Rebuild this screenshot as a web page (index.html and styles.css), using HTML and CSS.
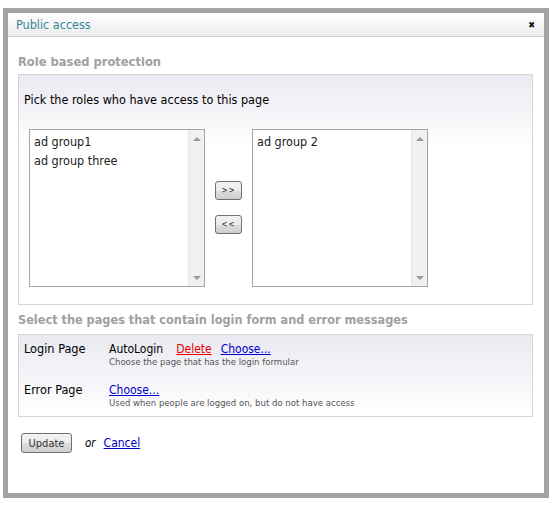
FILE: index.html
```html
<!DOCTYPE html>
<html>
<head>
<meta charset="utf-8">
<link rel="stylesheet" href="styles.css">
</head>
<body>
<div class="dialog">
  <div class="titlebar">
    <span class="title">Public access</span>
    <span class="close">&#x2716;</span>
  </div>
  <div class="content">
    <h2 class="heading">Role based protection</h2>
    <div class="box roles">
      <p class="intro">Pick the roles who have access to this page</p>
      <div class="picker">
        <div class="listbox">
          <div class="items">
            <div class="item">ad group1</div>
            <div class="item">ad group three</div>
          </div>
          <div class="scrollbar"><span class="arrow up"></span><span class="arrow down"></span></div>
        </div>
        <div class="movers">
          <button class="btn small">&gt;&gt;</button>
          <button class="btn small">&lt;&lt;</button>
        </div>
        <div class="listbox">
          <div class="items">
            <div class="item">ad group 2</div>
          </div>
          <div class="scrollbar"><span class="arrow up"></span><span class="arrow down"></span></div>
        </div>
      </div>
    </div>
    <h2 class="heading h2b">Select the pages that contain login form and error messages</h2>
    <div class="box pages">
      <div class="row">
        <div class="label">Login Page</div>
        <div class="value">
          <div class="line"><span class="page">AutoLogin</span><a class="link red" href="#">Delete</a><a class="link" href="#">Choose...</a></div>
          <div class="hint">Choose the page that has the login formular</div>
        </div>
      </div>
      <div class="row">
        <div class="label">Error Page</div>
        <div class="value">
          <div class="line"><a class="link first" href="#">Choose...</a></div>
          <div class="hint">Used when people are logged on, but do not have access</div>
        </div>
      </div>
    </div>
    <div class="actions">
      <button class="btn update">Update</button>
      <span class="or">or</span>
      <a class="link cancel" href="#">Cancel</a>
    </div>
  </div>
</div>
</body>
</html>
```
FILE: styles.css
```css
html, body {
  margin: 0;
  padding: 0;
  background: #fff;
}
body {
  font-family: "DejaVu Sans Condensed", "DejaVu Sans", sans-serif;
  font-size: 12px;
  color: #000;
  padding: 8px 0 0 3px;
}
.dialog {
  width: 536px;
  height: 480px;
  border: 5px solid #a3a3a3;
  background: #fff;
}
.titlebar {
  height: 23px;
  border-bottom: 1px solid #cfcfcf;
  background: linear-gradient(#ffffff, #ececec);
  display: flex;
  align-items: center;
  justify-content: space-between;
  padding: 0 9px 0 8px;
}
.title {
  color: #33889a;
  font-size: 12.5px;
}
.close {
  font-size: 9px;
  color: #111;
}
.content {
  padding: 0 11px 0 10px;
}
.heading {
  margin: 0;
  padding-top: 16px;
  height: 21px;
  font-size: 12.8px;
  font-weight: bold;
  color: #a0a0a0;
  line-height: 17px;
}
.h2b {
  padding-top: 6px;
  height: 23px;
  font-size: 12.6px;
}
.box {
  border: 1px solid #d4d4d4;
  background: linear-gradient(#e9e9f1, #ffffff 70px);
}
.roles {
  height: 229px;
  padding: 0 10px;
}
.intro {
  margin: 0 0 0 -5px;
  padding-top: 18px;
  height: 36px;
  line-height: 13px;
  font-size: 12.5px;
}
.picker {
  display: flex;
  align-items: flex-start;
}
.listbox {
  width: 174px;
  height: 156px;
  border: 1px solid #a5a5a5;
  background: #fff;
  display: flex;
}
.items {
  flex: 1;
  padding: 2px 4px;
}
.item {
  height: 19px;
  line-height: 19px;
  font-size: 12.5px;
  color: #222;
}
.scrollbar {
  width: 15px;
  background: #f0f0f0;
  border-left: 1px solid #e6e6e6;
  display: flex;
  flex-direction: column;
  justify-content: space-between;
  align-items: center;
  padding: 7px 0 6px;
}
.arrow {
  width: 0;
  height: 0;
  border-left: 4px solid transparent;
  border-right: 4px solid transparent;
}
.arrow.up { border-bottom: 4px solid #9a9a9a; }
.arrow.down { border-top: 4px solid #9a9a9a; }
.movers {
  width: 47px;
  display: flex;
  flex-direction: column;
  align-items: center;
  gap: 15px;
  padding-top: 52px;
}
.btn {
  font-family: "DejaVu Sans Condensed", "DejaVu Sans", sans-serif;
  border: 1px solid #707070;
  border-radius: 3px;
  background: linear-gradient(#f2f2f2, #ebebeb 50%, #dcdcdc 51%, #cfcfcf);
  color: #222;
  padding: 0;
  margin: 0;
}
.btn.small {
  width: 27px;
  height: 19px;
  font-size: 8px;
  letter-spacing: 1px;
}
.pages {
  height: 81px;
  background: linear-gradient(#e9e9f1, #ffffff 80px);
  padding: 0 5px;
}
.row {
  display: flex;
  padding-top: 7px;
  height: 35px;
}
.row + .row {
  padding-top: 6px;
}
.label {
  width: 85px;
  font-size: 12.6px;
  line-height: 14px;
}
.line {
  font-size: 12px;
  line-height: 14px;
}
.page { margin-right: 13px; }
.link {
  color: #0000cc;
  text-decoration: underline;
  margin-right: 9px;
}
.link.red { color: #ee0000; }
.hint {
  font-size: 9.5px;
  color: #555;
  line-height: 11px;
}
.actions {
  display: flex;
  align-items: center;
  padding: 16px 0 0 3px;
}
.btn.update {
  width: 51px;
  height: 20px;
  font-size: 11px;
  color: #333;
}
.or {
  font-style: italic;
  margin: 0 8px 0 13px;
  font-size: 11.5px;
}
.cancel {
  font-size: 12px;
}
```
